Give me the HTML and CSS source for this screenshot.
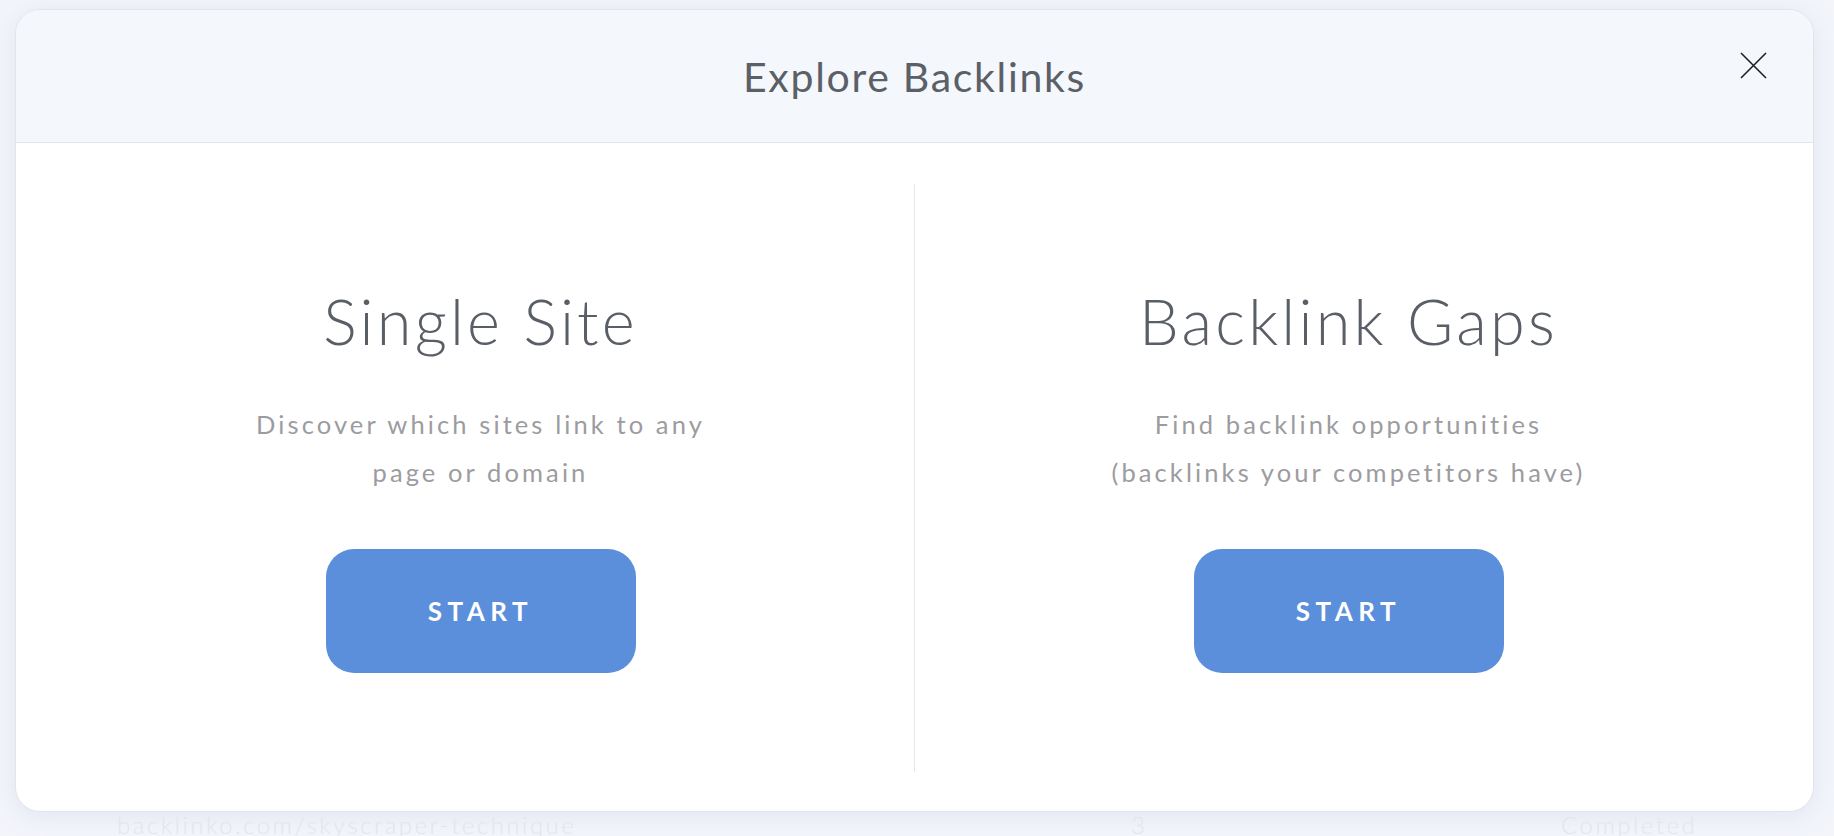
FILE: index.html
```html
<!DOCTYPE html>
<html>
<head>
    <title>Explore Backlinks</title>
    <link rel="stylesheet" href="styles.css">
</head>
<body>
    <div class="page">
        <div class="modal">
            <div class="modal-header">
                <h2 class="modal-title">Explore Backlinks</h2>
                <button class="close-btn" aria-label="Close">
                    <svg width="27" height="27" viewBox="0 0 27 27">
                        <path d="M1 1 L26 26 M26 1 L1 26" stroke="#1f1f1f" stroke-width="1.6" fill="none"/>
                    </svg>
                </button>
            </div>
            <div class="modal-body">
                <div class="option">
                    <h3 class="option-title">Single Site</h3>
                    <p class="option-text">Discover which sites link to any<br>page or domain</p>
                    <button class="start-btn">START</button>
                </div>
                <div class="divider"></div>
                <div class="option">
                    <h3 class="option-title">Backlink Gaps</h3>
                    <p class="option-text">Find backlink opportunities<br>(backlinks your competitors have)</p>
                    <button class="start-btn">START</button>
                </div>
            </div>
        </div>

        <div class="bg-row">
            <span>backlinko.com/skyscraper-technique</span>
            <span>3</span>
            <span>Completed</span>
        </div>
    </div>
</body>
</html>
```

FILE: styles.css
```css
html, body {
    margin: 0;
    height: 100%;
}

body {
    font-family: 'Lato', 'Noto Sans', sans-serif;
    background-color: #f3f5fb;
    overflow: hidden;
}

.page {
    padding: 9px 20px 0 15px;
}

.modal {
    background-color: #fff;
    border: 1px solid #e2e4ea;
    border-radius: 25px;
    overflow: hidden;
    box-shadow: 0 4px 24px rgba(150, 160, 195, 0.18);
}

.modal-header {
    position: relative;
    height: 132px;
    background-color: #f4f7fc;
    border-bottom: 1px solid #e2e4ea;
    display: flex;
    align-items: center;
    justify-content: center;
}

.modal-title {
    margin: 0;
    font-size: 41px;
    font-weight: 400;
    color: #5b5f66;
    letter-spacing: 1.7px;
}

.close-btn {
    position: absolute;
    top: 42px;
    right: 46px;
    padding: 0;
    border: none;
    background: none;
    cursor: pointer;
    line-height: 0;
}

.modal-body {
    display: grid;
    grid-template-columns: 1fr 1px 1fr;
    padding: 41px 31px 39px;
    height: 588px;
}

.divider {
    background-color: #e6e7eb;
}

.option {
    display: flex;
    flex-direction: column;
    align-items: center;
    justify-content: center;
    text-align: center;
}

.option-title {
    margin: 0;
    font-size: 63px;
    line-height: 74px;
    font-weight: 300;
    color: #5a5f67;
    letter-spacing: 3.2px;
}

.option-text {
    margin: 42px 0 0;
    font-size: 25.5px;
    line-height: 48px;
    font-weight: 400;
    color: #9c9ca0;
    letter-spacing: 3.1px;
}

.start-btn {
    margin-top: 53px;
    width: 310px;
    height: 124px;
    border: none;
    border-radius: 28px;
    background-color: #5b8fdb;
    color: #fff;
    font-family: 'Lato', 'Noto Sans', sans-serif;
    font-size: 26px;
    font-weight: 700;
    letter-spacing: 5.5px;
    cursor: pointer;
}

.start-btn:hover {
    background-color: #4c80cc;
}

/* faded table row behind the overlay */
.bg-row {
    display: grid;
    grid-template-columns: 1014px 430px auto;
    padding: 1px 0 0 102px;
    font-size: 24px;
    line-height: 23px;
    font-weight: 300;
    color: #e1e5ef;
    letter-spacing: 2.5px;
    white-space: nowrap;
}
```
